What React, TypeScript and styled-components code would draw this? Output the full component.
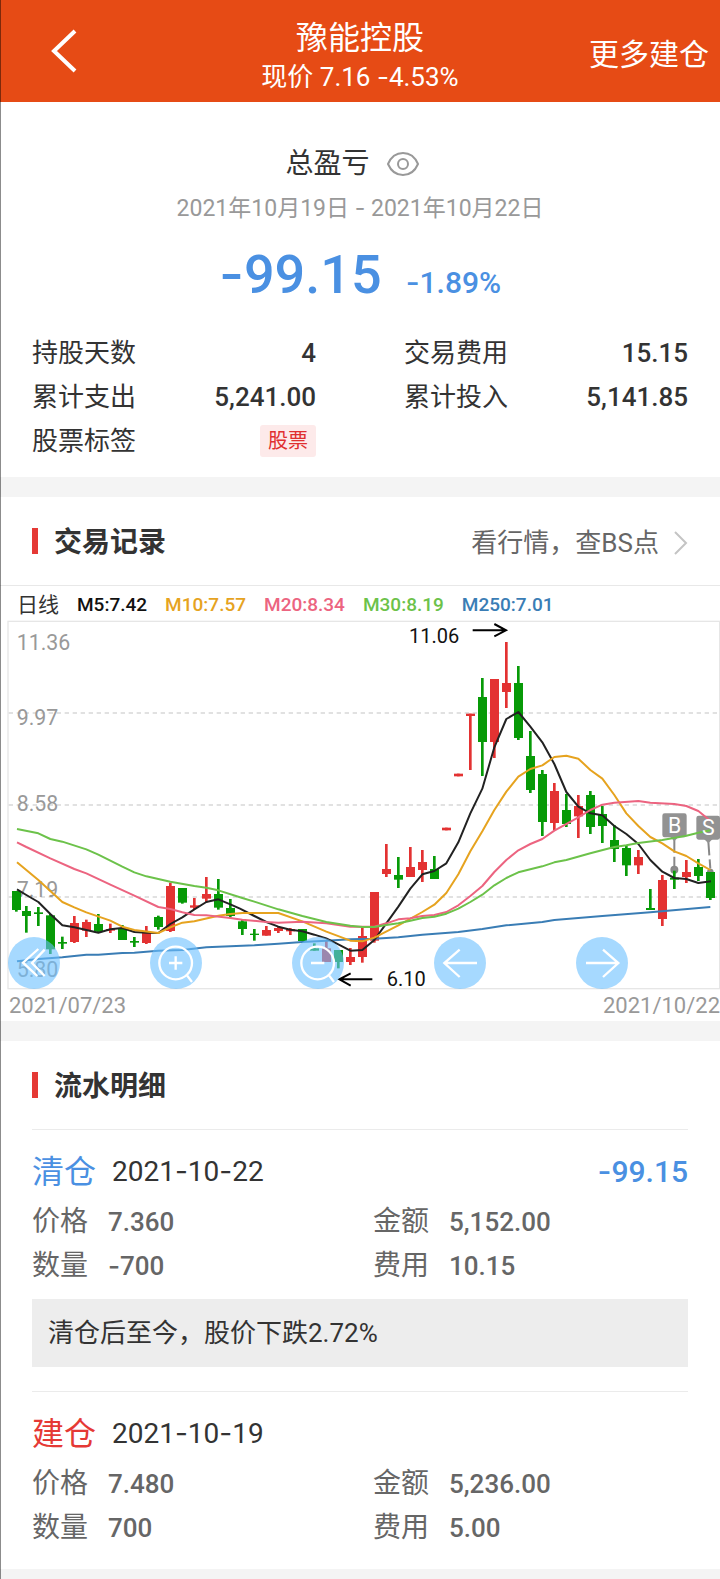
import React, { Fragment } from "react";
import styled, { createGlobalStyle } from "styled-components";

const GlobalStyle = createGlobalStyle`
  *, *::before, *::after { box-sizing: border-box; }
  body {
    margin: 0;
    background: #f4f4f4;
    color: #333;
    font-family: Roboto, "Noto Sans CJK SC", sans-serif;
    font-size: 26px;
  }
  h1, h2, h3, p, dl, dd, dt { margin: 0; font-weight: 400; }
  button { border: 0; padding: 0; background: none; color: inherit; font: inherit; cursor: pointer; }
`;

const BLUE = "#4a90e2";
const RED = "#e53935";
const UP = "#e33232";
const DOWN = "#079a07";

const Page = styled.div`
  position: relative;
  min-height: 100vh;
  &::before {
    content: "";
    position: absolute;
    z-index: 2;
    inset: 0 auto 0 0;
    width: 1px;
    background: rgba(0, 0, 0, 0.45);
  }
`;

const TopBar = styled.header`
  display: grid;
  grid-template-columns: 1fr auto 1fr;
  align-items: center;
  height: 102px;
  padding: 0 11px;
  background: #e64b15;
  color: #fff;
`;

const BackButton = styled.button`
  justify-self: start;
  display: flex;
  margin-left: 32px;
  padding: 4px;
`;

const TopTitle = styled.div`
  text-align: center;
  padding-top: 8px;
`;

const StockName = styled.h1`
  font-size: 32px;
  line-height: 44px;
`;

const StockPrice = styled.p`
  font-size: 26px;
  line-height: 34px;
`;

const MoreButton = styled.button`
  justify-self: end;
  font-size: 30px;
  line-height: 44px;
  padding-top: 8px;
`;

const Panel = styled.section`
  background: #fff;
  margin-bottom: 20px;
`;

const Summary = styled(Panel)`
  padding: 42px 32px 14px;
`;

const SummaryTitle = styled.div`
  display: flex;
  align-items: center;
  justify-content: center;
  gap: 17px;
  height: 40px;
  padding-right: 16px;
`;

const SummaryHeading = styled.h2`
  font-size: 28px;
  line-height: 40px;
`;

const EyeButton = styled.button`
  display: flex;
`;

const Period = styled.p`
  margin-top: 9px;
  text-align: center;
  font-size: 23px;
  line-height: 30px;
  color: #999;
`;

const Profit = styled.div`
  display: flex;
  justify-content: center;
  align-items: baseline;
  gap: 24px;
  height: 60px;
  margin-top: 20px;
  line-height: 60px;
  font-weight: 500;
  color: ${BLUE};
`;

const ProfitAmount = styled.span`
  font-size: 54px;
`;

const ProfitRate = styled.span`
  font-size: 30px;
`;

const Stats = styled.dl`
  display: grid;
  grid-template-columns: 1fr 1fr;
  column-gap: 88px;
  margin-top: 27px;
`;

const Stat = styled.div`
  display: flex;
  justify-content: space-between;
  align-items: center;
  height: 44px;
  line-height: 44px;
`;

const StatValue = styled.dd`
  display: flex;
  font-weight: 500;
`;

const Tag = styled.span`
  padding: 0 8px;
  border-radius: 3px;
  background: #fdeaea;
  color: #e03030;
  font-size: 20px;
  font-weight: 400;
  line-height: 32px;
`;

const SectionHead = styled.div`
  display: flex;
  align-items: center;
  height: 88px;
  padding: 0 32px;
`;

const SectionTitle = styled.h2`
  display: flex;
  align-items: center;
  gap: 16px;
  padding-top: 4px;
  font-size: 28px;
  font-weight: 700;
  line-height: 44px;
  &::before {
    content: "";
    width: 6px;
    height: 26px;
    margin-bottom: 4px;
    background: ${RED};
  }
`;

const QuoteLink = styled.a`
  display: flex;
  align-items: center;
  gap: 15px;
  margin-left: auto;
  padding-top: 3px;
  color: #666;
  text-decoration: none;
  line-height: 44px;
`;

const Legend = styled.div`
  display: flex;
  align-items: center;
  gap: 18px;
  height: 35px;
  padding: 4px 17px 0;
  border-top: 1px solid #e8e8e8;
  font-size: 19px;
  font-weight: 500;
  line-height: 30px;
`;

const LegendItem = styled.span<{ $color: string }>`
  color: ${(p) => p.$color};
`;

const LegendName = styled.span`
  font-size: 21px;
  font-weight: 400;
`;

const ChartArea = styled.div`
  position: relative;
`;

const ChartSvg = styled.svg`
  display: block;
  width: 100%;
  height: auto;
  overflow: visible;
`;

const ChartTools = styled.div`
  position: absolute;
  left: 8px;
  right: 2px;
  bottom: 1px;
  display: grid;
  grid-template-columns: repeat(5, 1fr);
`;

const ToolButton = styled.button`
  width: 52px;
  height: 52px;
  border-radius: 50%;
  background: rgba(107, 192, 255, 0.6);
`;

const ChartDates = styled.div`
  display: flex;
  justify-content: space-between;
  padding-left: 9px;
  font-size: 22px;
  line-height: 31px;
  color: #999;
`;

const Record = styled.article`
  margin: 0 32px;
  padding: 19px 0 24px;
  border-top: 1px solid #ebebeb;
  &:last-child { padding-bottom: 19px; }
`;

const RecordHead = styled.div`
  display: flex;
  align-items: center;
  gap: 16px;
  margin-bottom: 6px;
  line-height: 44px;
`;

const RecordKind = styled.h3<{ $color: string }>`
  font-size: 32px;
  color: ${(p) => p.$color};
`;

const RecordDate = styled.time`
  font-size: 28px;
`;

const RecordProfit = styled.span`
  margin-left: auto;
  font-size: 30px;
  font-weight: 500;
  color: ${BLUE};
`;

const Fields = styled.dl`
  display: grid;
  grid-template-columns: 341fr 315fr;
  color: #666;
`;

const Field = styled.div`
  display: flex;
  align-items: center;
  gap: 20px;
  height: 44px;
  line-height: 44px;
`;

const FieldName = styled.dt`
  font-size: 28px;
`;

const FieldValue = styled.dd`
  font-weight: 500;
`;

const Note = styled.p`
  margin-top: 11px;
  padding: 12px 16px;
  background: #ededed;
  line-height: 44px;
`;

/* Roboto's hyphen is short and low; Inter's works as a minus sign. */
const Dash = styled.span`
  font-family: Inter, sans-serif;
`;

const Num = ({ children }: { children: string }) => (
  <span>
    {children.split("-").map((part, i) => (
      <Fragment key={i}>
        {i > 0 && <Dash>-</Dash>}
        {part}
      </Fragment>
    ))}
  </span>
);

/* Chart units are thirds of a pixel: high, open/close top, open/close bottom, low, rising. */
type Candle = [number, number, number, number, 0 | 1];
const CANDLES: Candle[] = [
  [843, 843, 900, 905, 0], [888, 903, 918, 968, 0], [891, 907, 912, 948, 0], [912, 916, 1018, 1032, 0],
  [980, 996, 1001, 1017, 0], [918, 939, 996, 999, 1], [929, 936, 962, 981, 1], [912, 942, 965, 968, 0],
  [941, 957, 962, 969, 1], [945, 957, 990, 990, 0], [981, 993, 998, 1011, 0], [948, 969, 999, 1002, 1],
  [917, 921, 951, 959, 0], [818, 828, 963, 966, 1], [834, 834, 878, 881, 0], [864, 886, 893, 898, 1],
  [801, 852, 866, 877, 1], [807, 852, 893, 899, 0], [867, 894, 918, 922, 0], [930, 934, 957, 975, 0],
  [957, 971, 975, 992, 0], [948, 960, 977, 977, 1], [951, 954, 963, 969, 1], [954, 957, 964, 975, 1],
  [957, 957, 993, 993, 0], [1000, 1015, 1022, 1022, 0], [990, 1015, 1056, 1056, 1], [1020, 1020, 1056, 1075, 0],
  [1014, 1041, 1056, 1065, 1], [954, 978, 1041, 1058, 1], [846, 846, 992, 998, 1], [702, 777, 792, 801, 1],
  [741, 795, 809, 834, 0], [711, 771, 801, 801, 1], [720, 756, 780, 816, 1], [738, 777, 807, 807, 0],
  [653, 653, 661, 661, 1], [491, 491, 499, 499, 1], [311, 311, 318, 480, 1], [204, 261, 396, 498, 0],
  [207, 207, 396, 444, 1], [96, 219, 246, 294, 1], [168, 219, 384, 390, 0], [363, 438, 540, 549, 0],
  [480, 492, 636, 678, 0], [519, 543, 639, 660, 1], [552, 600, 642, 651, 0], [555, 588, 619, 684, 1],
  [543, 555, 651, 672, 0], [588, 612, 648, 699, 0], [645, 690, 717, 756, 0], [708, 714, 766, 798, 0],
  [720, 741, 766, 792, 1], [837, 894, 900, 900, 0], [795, 810, 927, 948, 1], [782, 803, 809, 837, 0],
  [750, 786, 801, 819, 1], [747, 771, 798, 813, 0], [786, 786, 864, 870, 0],
];
const candleX = (i: number) => (i === 0 ? 49 : 43 + 36 * i);

const AVERAGES = [
  { color: "#3a7db5", points: "51,1054 115,1047 187,1042 259,1034 295,1034 367,1029 403,1028 475,1022 547,1020 619,1012 691,1009 763,1006 835,1001 907,996 979,992 1051,988 1123,986 1195,982 1267,974 1375,966 1447,957 1519,946 1627,936 1663,930 1807,918 1951,907 2131,891" },
  { color: "#222", points: "51,838 79,855 115,876 151,912 187,946 223,952 259,960 295,968 331,958 367,954 403,966 439,968 475,969 511,942 547,922 583,898 619,876 655,868 691,883 720,896 763,918 799,936 835,950 871,959 907,964 943,974 979,985 1015,1003 1051,1022 1087,1020 1123,990 1159,940 1195,890 1231,836 1267,793 1303,783 1339,760 1375,697 1411,610 1447,536 1483,412 1519,327 1555,306 1591,350 1627,397 1663,462 1699,546 1735,590 1771,610 1807,616 1843,648 1879,672 1915,702 1951,750 1987,785 2023,804 2059,807 2095,819 2133,814" },
  { color: "#e6a31f", points: "51,757 115,810 187,876 223,892 259,907 331,932 367,950 403,960 475,969 511,952 547,938 583,934 655,917 691,912 727,909 835,909 907,934 979,965 1051,992 1087,994 1123,983 1195,946 1267,906 1303,884 1339,849 1375,793 1411,724 1447,664 1483,600 1519,545 1555,500 1591,477 1627,466 1663,441 1699,437 1735,446 1771,480 1807,506 1843,555 1879,610 1915,648 1951,681 1987,700 2023,724 2059,738 2095,760 2131,780" },
  { color: "#ec6480", points: "51,697 79,711 151,745 223,777 259,790 331,824 403,857 475,891 511,897 547,907 583,915 619,916 691,924 727,929 799,936 835,938 907,935 979,940 1051,950 1123,950 1159,940 1195,928 1231,925 1267,918 1303,915 1339,906 1375,886 1411,858 1447,828 1483,786 1519,750 1555,721 1591,702 1627,687 1663,662 1735,622 1771,600 1807,584 1843,578 1915,573 1951,578 2023,582 2059,588 2095,603 2131,632" },
  { color: "#6cc24a", points: "51,657 115,670 151,687 187,695 259,718 295,734 367,770 403,787 439,799 511,815 583,828 619,833 655,841 727,864 763,875 835,898 907,918 979,936 1051,947 1087,951 1123,951 1159,945 1195,940 1231,932 1267,924 1303,920 1339,911 1375,896 1411,876 1447,854 1483,826 1519,804 1555,787 1627,769 1663,757 1699,750 1771,730 1843,711 1879,706 1915,699 1987,690 2059,677 2095,668 2131,661" },
];

const PRICES: [string, number][] = [
  ["11.36", 120], ["9.97", 345], ["8.58", 602], ["7.19", 862], ["5.80", 1100],
];

const KLineChart = () => (
  <ChartSvg viewBox="0 30 2160 1110" role="img" aria-label="日线">
    <rect x="24" y="34" width="2135" height="1102" fill="none" stroke="#e6e6e6" strokeWidth="4" />
    {[309, 585, 861].map((y) => (
      <line key={y} x1="26" x2="2154" y1={y} y2={y} stroke="#d8d8d8" strokeWidth="5" strokeDasharray="13 11" />
    ))}
    <g fill="#999" fontSize="64">
      {PRICES.map(([text, y]) => <text key={text} x="50" y={y}>{text}</text>)}
    </g>
    <g stroke="#888" strokeWidth="6" fill="#8c8c8c">
      <path d="M2023 688V728M2023 740V772M2125 694L2128 736M2129 748L2131 776" />
      <circle cx="2023" cy="779" r="9" />
      <circle cx="2131" cy="786" r="7" />
    </g>
    {CANDLES.map(([high, top, bottom, low, up], i) => (
      <g key={i} fill={up ? UP : DOWN}>
        <rect x={candleX(i) - 4} y={high} width="8" height={low - high} />
        <rect x={candleX(i) - 13} y={top} width="27" height={bottom - top} />
      </g>
    ))}
    <g fill="#929292">
      <rect x="1987" y="610" width="73" height="72" rx="7" />
      <rect x="2089" y="617" width="71" height="72" rx="7" />
      <path d="M2010 680H2036L2023 694ZM2112 687H2138L2125 700Z" />
    </g>
    {AVERAGES.map((a) => (
      <polyline key={a.color} points={a.points} fill="none" stroke={a.color} strokeWidth="6" strokeLinejoin="round" />
    ))}
    <g fill="#fff" fontSize="64" textAnchor="middle">
      <text x="2024" y="669">B</text>
      <text x="2125" y="675">S</text>
    </g>
    <g fill="#111" fontSize="60">
      <text x="1227" y="98">11.06</text>
      <text x="1160" y="1129">6.10</text>
    </g>
    <path
      d="M1418 61H1518M1483 42L1518 61L1483 79M1117 1108H1018M1052 1090L1018 1108L1052 1127"
      fill="none" stroke="#000" strokeWidth="6"
    />
  </ChartSvg>
);

const ToolIcon = ({ d, lens }: { d: string; lens?: boolean }) => (
  <svg width="52" height="52" viewBox="0 0 156 156" fill="none" stroke="#fff" strokeWidth="7" aria-hidden="true">
    {lens && <circle cx="77" cy="78" r="49" />}
    <path d={d} />
  </svg>
);

const TOOLS = [
  { label: "最早", d: "M91 36L45 77L88 117M110 38L72 78L110 117" },
  { label: "放大", d: "M57 78H97M77 58V98M111 115L126 135", lens: true },
  { label: "缩小", d: "M57 78H97M111 115L126 135", lens: true },
  { label: "向前", d: "M31 78H129M77 38L31 78L77 120" },
  { label: "向后", d: "M30 78H127M81 38L127 78L81 120" },
];

const LEGEND = [
  ["M5:7.42", "#111"], ["M10:7.57", "#e6a31f"], ["M20:8.34", "#ec6480"],
  ["M30:8.19", "#6cc24a"], ["M250:7.01", "#3a7db5"],
];

const STATS = [
  ["持股天数", "4"], ["交易费用", "15.15"], ["累计支出", "5,241.00"], ["累计投入", "5,141.85"],
];

const RECORDS = [
  {
    kind: "清仓", color: BLUE, date: "2021-10-22", profit: "-99.15",
    fields: [["价格", "7.360"], ["金额", "5,152.00"], ["数量", "-700"], ["费用", "10.15"]],
    note: "清仓后至今，股价下跌2.72%",
  },
  {
    kind: "建仓", color: RED, date: "2021-10-19",
    fields: [["价格", "7.480"], ["金额", "5,236.00"], ["数量", "700"], ["费用", "5.00"]],
  },
];

export default function App() {
  return (
    <Page>
      <GlobalStyle />
      <TopBar>
        <BackButton aria-label="返回">
          <svg width="32" height="44" viewBox="0 0 32 44" fill="none" stroke="#fff" strokeWidth="4">
            <path d="M28 2L7 22L28 42" />
          </svg>
        </BackButton>
        <TopTitle>
          <StockName>豫能控股</StockName>
          <StockPrice>现价 <Num>7.16 -4.53%</Num></StockPrice>
        </TopTitle>
        <MoreButton>更多建仓</MoreButton>
      </TopBar>

      <main>
        <Summary>
          <SummaryTitle>
            <SummaryHeading>总盈亏</SummaryHeading>
            <EyeButton aria-label="隐藏金额">
              <svg width="32" height="24" viewBox="0 0 32 24" fill="none" stroke="#999" strokeWidth="2">
                <path d="M1 12C4 5 9 1 16 1S28 5 31 12C28 19 23 23 16 23S4 19 1 12Z" />
                <circle cx="16" cy="12" r="5" />
              </svg>
            </EyeButton>
          </SummaryTitle>
          <Period><Num>2021年10月19日 - 2021年10月22日</Num></Period>
          <Profit>
            <ProfitAmount><Num>-99.15</Num></ProfitAmount>
            <ProfitRate><Num>-1.89%</Num></ProfitRate>
          </Profit>
          <Stats>
            {STATS.map(([name, value]) => (
              <Stat key={name}>
                <dt>{name}</dt>
                <StatValue>{value}</StatValue>
              </Stat>
            ))}
            <Stat>
              <dt>股票标签</dt>
              <StatValue><Tag>股票</Tag></StatValue>
            </Stat>
          </Stats>
        </Summary>

        <Panel>
          <SectionHead>
            <SectionTitle>交易记录</SectionTitle>
            <QuoteLink href="#quote">
              看行情，查BS点
              <svg width="14" height="24" viewBox="0 0 14 24" fill="none" stroke="#c4c4c4" strokeWidth="2">
                <path d="M1 1L12 12L1 23" />
              </svg>
            </QuoteLink>
          </SectionHead>
          <Legend>
            <LegendName>日线</LegendName>
            {LEGEND.map(([text, color]) => <LegendItem key={text} $color={color}>{text}</LegendItem>)}
          </Legend>
          <ChartArea>
            <KLineChart />
            <ChartTools>
              {TOOLS.map((t) => (
                <ToolButton key={t.label} aria-label={t.label}>
                  <ToolIcon d={t.d} lens={t.lens} />
                </ToolButton>
              ))}
            </ChartTools>
          </ChartArea>
          <ChartDates>
            <span>2021/07/23</span>
            <span>2021/10/22</span>
          </ChartDates>
        </Panel>

        <Panel>
          <SectionHead>
            <SectionTitle>流水明细</SectionTitle>
          </SectionHead>
          {RECORDS.map((r) => (
            <Record key={r.date}>
              <RecordHead>
                <RecordKind $color={r.color}>{r.kind}</RecordKind>
                <RecordDate><Num>{r.date}</Num></RecordDate>
                {r.profit && <RecordProfit><Num>{r.profit}</Num></RecordProfit>}
              </RecordHead>
              <Fields>
                {r.fields.map(([name, value]) => (
                  <Field key={name}>
                    <FieldName>{name}</FieldName>
                    <FieldValue><Num>{value}</Num></FieldValue>
                  </Field>
                ))}
              </Fields>
              {r.note && <Note>{r.note}</Note>}
            </Record>
          ))}
        </Panel>
      </main>
    </Page>
  );
}
